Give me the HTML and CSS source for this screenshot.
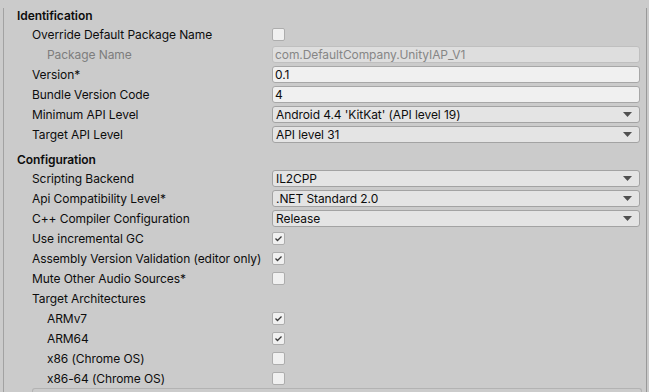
FILE: index.html
```html
<!DOCTYPE html>
<html lang="en">
<head>
    <meta charset="UTF-8">
    <meta name="viewport" content="width=device-width, initial-scale=1.0">
    <title>Player Settings - Android</title>
    <link rel="stylesheet" href="styles.css">
</head>
<body>
    <div class="inspector">
        <!-- Identification -->
        <section class="group">
            <div class="group-title">Identification</div>
            <div class="row">
                <span class="label">Override Default Package Name</span>
                <span class="checkbox"></span>
            </div>
            <div class="row sub">
                <span class="label muted">Package Name</span>
                <div class="field disabled">com.DefaultCompany.UnityIAP_V1</div>
            </div>
            <div class="row">
                <span class="label">Version*</span>
                <div class="field">0.1</div>
            </div>
            <div class="row">
                <span class="label">Bundle Version Code</span>
                <div class="field">4</div>
            </div>
            <div class="row">
                <span class="label">Minimum API Level</span>
                <div class="dropdown">Android 4.4 'KitKat' (API level 19)<svg class="arrow" width="9" height="5" viewBox="0 0 9 5"><path d="M0 0H9L4.5 5Z"/></svg></div>
            </div>
            <div class="row">
                <span class="label">Target API Level</span>
                <div class="dropdown">API level 31<svg class="arrow" width="9" height="5" viewBox="0 0 9 5"><path d="M0 0H9L4.5 5Z"/></svg></div>
            </div>
        </section>

        <!-- Configuration -->
        <section class="group">
            <div class="group-title">Configuration</div>
            <div class="row">
                <span class="label">Scripting Backend</span>
                <div class="dropdown">IL2CPP<svg class="arrow" width="9" height="5" viewBox="0 0 9 5"><path d="M0 0H9L4.5 5Z"/></svg></div>
            </div>
            <div class="row">
                <span class="label">Api Compatibility Level*</span>
                <div class="dropdown">.NET Standard 2.0<svg class="arrow" width="9" height="5" viewBox="0 0 9 5"><path d="M0 0H9L4.5 5Z"/></svg></div>
            </div>
            <div class="row">
                <span class="label">C++ Compiler Configuration</span>
                <div class="dropdown">Release<svg class="arrow" width="9" height="5" viewBox="0 0 9 5"><path d="M0 0H9L4.5 5Z"/></svg></div>
            </div>
            <div class="row">
                <span class="label">Use incremental GC</span>
                <span class="checkbox checked"><svg width="11" height="11" viewBox="0 0 11 11"><path d="M2.5 5.5L4.5 7.5L8.5 3.5"/></svg></span>
            </div>
            <div class="row">
                <span class="label">Assembly Version Validation (editor only)</span>
                <span class="checkbox checked"><svg width="11" height="11" viewBox="0 0 11 11"><path d="M2.5 5.5L4.5 7.5L8.5 3.5"/></svg></span>
            </div>
            <div class="row">
                <span class="label">Mute Other Audio Sources*</span>
                <span class="checkbox"></span>
            </div>
            <div class="row">
                <span class="label">Target Architectures</span>
            </div>
            <div class="row sub">
                <span class="label">ARMv7</span>
                <span class="checkbox checked"><svg width="11" height="11" viewBox="0 0 11 11"><path d="M2.5 5.5L4.5 7.5L8.5 3.5"/></svg></span>
            </div>
            <div class="row sub">
                <span class="label">ARM64</span>
                <span class="checkbox checked"><svg width="11" height="11" viewBox="0 0 11 11"><path d="M2.5 5.5L4.5 7.5L8.5 3.5"/></svg></span>
            </div>
            <div class="row sub">
                <span class="label">x86 (Chrome OS)</span>
                <span class="checkbox"></span>
            </div>
            <div class="row sub">
                <span class="label">x86-64 (Chrome OS)</span>
                <span class="checkbox"></span>
            </div>
        </section>

        <div class="next-box"></div>
    </div>
</body>
</html>
```

FILE: styles.css
```css
/* Unity light inspector */
body {
    margin: 0;
    font-family: Inter, "Noto Sans", sans-serif;
    font-size: 12px;
    letter-spacing: -0.08px;
    background-color: #cbcbcb;
    color: #0d0d0d;
    overflow: hidden;
}

.inspector {
    height: 392px;
    margin: 0 2px 0 3px;
    border-left: 1px solid #a2a2a2;
    border-right: 1px solid #999;
    box-sizing: border-box;
}

.group + .group {
    margin-top: 1px;
}

.group-title {
    height: 16px;
    line-height: 16px;
    margin-top: 8px;
    padding-left: 13px;
    font-weight: 600;
}

.row {
    display: grid;
    grid-template-columns: 268px 368px;
    align-items: center;
    height: 20px;
}

.label {
    padding-left: 28px;
    white-space: nowrap;
}

.row.sub .label {
    padding-left: 43px;
}

.label.muted {
    color: #7d7d7d;
}

.field, .dropdown {
    height: 17px;
    line-height: 15px;
    box-sizing: border-box;
    border-radius: 3px;
    white-space: nowrap;
}

.field {
    background-color: #f0f0f0;
    border: 1px solid #a7a7a7;
    padding-left: 2px;
}

.field.disabled {
    background-color: #dedede;
    border-color: #bfbfbf;
    color: #868686;
}

.dropdown {
    position: relative;
    background-color: #e4e4e4;
    border: 1px solid #a3a3a3;
    padding-left: 3px;
}

.dropdown .arrow {
    position: absolute;
    right: 7px;
    top: 5px;
    fill: #505050;
}

.checkbox {
    width: 13px;
    height: 13px;
    box-sizing: border-box;
    background-color: #f0f0f0;
    border: 1px solid #adadad;
    border-radius: 2px;
    display: flex;
    align-items: center;
    justify-content: center;
}

.checkbox svg {
    fill: none;
    stroke: #3a3a3a;
    stroke-width: 1.3;
}

.next-box {
    margin: 0 4px 0 28px;
    height: 8px;
    border: 1px solid #b3b3b3;
    border-bottom: none;
    border-radius: 3px 3px 0 0;
}
```
